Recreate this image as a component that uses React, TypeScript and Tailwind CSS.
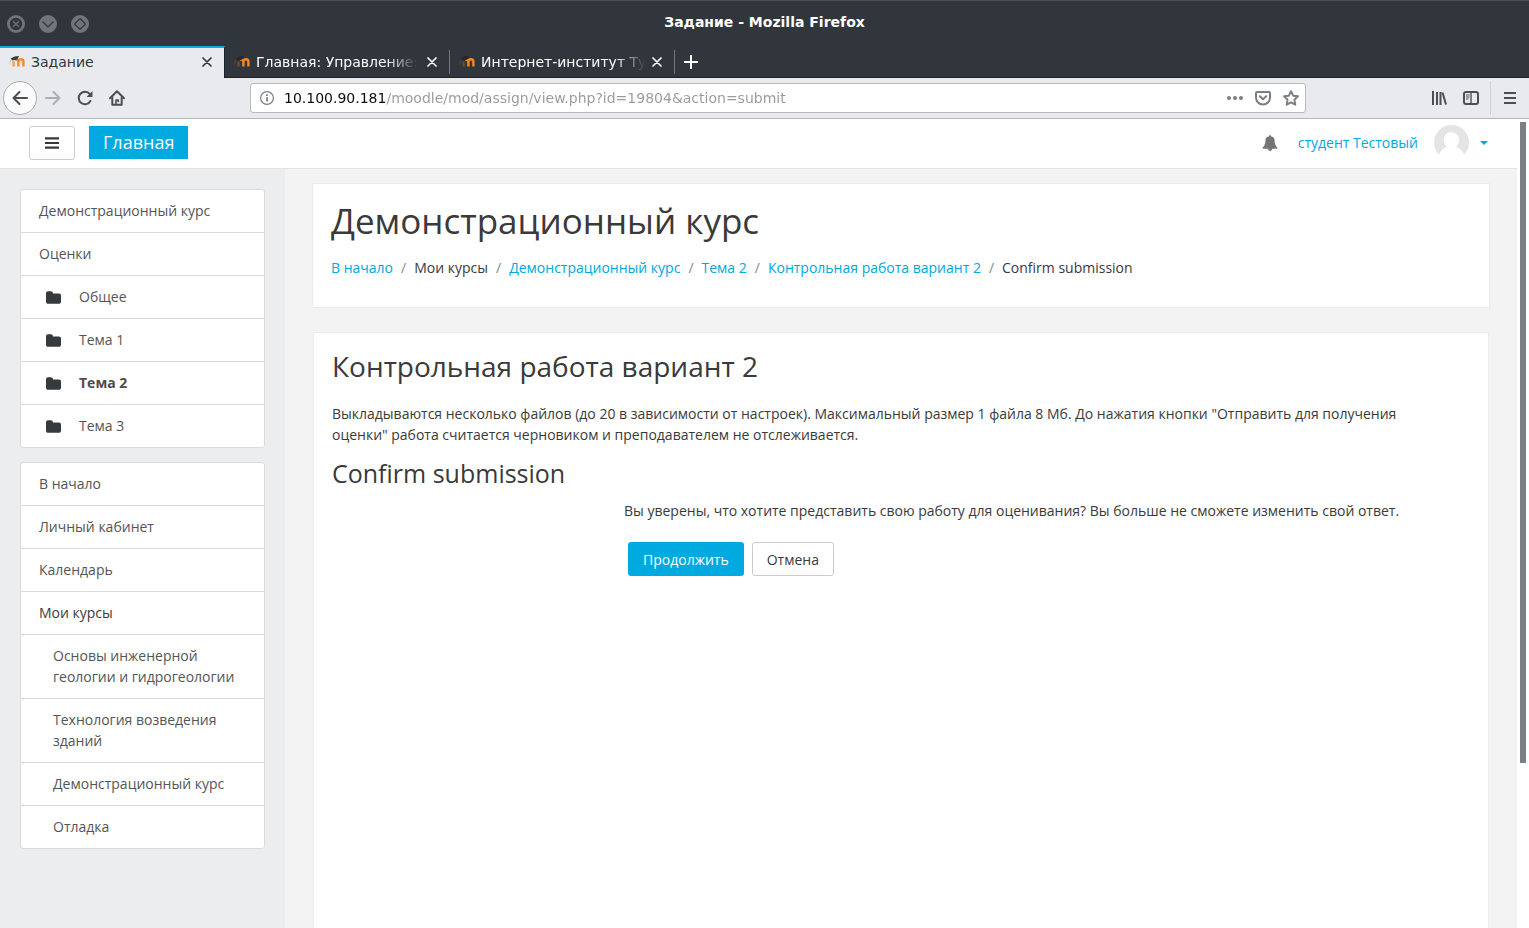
import { useState } from "react";

interface BrowserTab {
  title: string;
  active?: boolean;
}

interface NavItem {
  label: string;
  icon?: boolean;
  nested?: boolean;
  bold?: boolean;
  plain?: boolean;
}

const tabs: BrowserTab[] = [
  { title: "Задание", active: true },
  { title: "Главная: Управление:" },
  { title: "Интернет-институт Ту" },
];

const courseNav: NavItem[] = [
  { label: "Демонстрационный курс" },
  { label: "Оценки" },
  { label: "Общее", icon: true },
  { label: "Тема 1", icon: true },
  { label: "Тема 2", icon: true, bold: true },
  { label: "Тема 3", icon: true },
];

const siteNav: NavItem[] = [
  { label: "В начало" },
  { label: "Личный кабинет" },
  { label: "Календарь" },
  { label: "Мои курсы", plain: true },
  { label: "Основы инженерной геологии и гидрогеологии", nested: true },
  { label: "Технология возведения зданий", nested: true },
  { label: "Демонстрационный курс", nested: true },
  { label: "Отладка", nested: true },
];

const crumbs = [
  { label: "В начало", link: true },
  { label: "Мои курсы", link: false },
  { label: "Демонстрационный курс", link: true },
  { label: "Тема 2", link: true },
  { label: "Контрольная работа вариант 2", link: true },
  { label: "Confirm submission", link: false },
];

function MoodleIcon({ dark }: { dark?: boolean }) {
  return (
    <svg width="16" height="16" viewBox="0 0 16 16" className="shrink-0" aria-hidden="true">
      <path d="M4.600 12.600V7.400" stroke={dark ? "#6b4a2c" : "#f0a050"} strokeWidth="2.400" />
      <path
        d="M9.400 12.600V7.800a2.400 2.400 0 0 0-3.400-2M9.400 12.600V7.700a2.500 2.500 0 0 1 5 0v4.900"
        fill="none"
        stroke="#f08a24"
        strokeWidth="2.400"
      />
      <path d="M1.500 4.800L5.500 2.400l4.500-.4-1.600 3.600-5 1z" fill={dark ? "#24272b" : "#3c3c3c"} />
      <path d="M2.200 5.600C1 7.400.8 9 .9 10.600" fill="none" stroke={dark ? "#5e4a3a" : "#d8c8ba"} strokeWidth="1" />
    </svg>
  );
}

function CloseIcon() {
  return (
    <svg width="10" height="10" viewBox="0 0 10 10" aria-hidden="true">
      <path d="M1 1l8 8M9 1l-8 8" stroke="currentColor" strokeWidth="1.700" strokeLinecap="round" />
    </svg>
  );
}

function BellIcon() {
  return (
    <svg width="16" height="16" viewBox="0 0 1792 1792" fill="currentColor" aria-hidden="true">
      <path d="M912 1696q0-16-16-16-59 0-101.500-42.500t-42.500-101.500q0-16-16-16t-16 16q0 73 51.500 124.500t124.500 51.500q16 0 16-16zm816-288q0 52-38 90t-90 38h-448q0 106-75 181t-181 75-181-75-75-181h-448q-52 0-90-38t-38-90q50-42 91-88t85-119.500 74.500-158.500 50-206 19.500-260q0-152 117-282.500t307-158.500q-8-19-8-39 0-40 28-68t68-28 68 28 28 68q0 20-8 39 190 28 307 158.500t117 282.500q0 139 19.500 260t50 206 74.500 158.500 85 119.500 91 88z" />
    </svg>
  );
}

function FolderIcon() {
  return (
    <svg width="15" height="13" viewBox="0 128 1664 1408" className="ml-[7px] mr-[18px] text-[#373a3c]" aria-hidden="true">
      <path
        d="M1664 608v704q0 92-66 158t-158 66h-1216q-92 0-158-66t-66-158v-960q0-92 66-158t158-66h320q92 0 158 66t66 158v32h672q92 0 158 66t66 158z"
        fill="currentColor"
      />
    </svg>
  );
}

function TitleBar() {
  return (
    <div className="grid h-[46px] grid-cols-[1fr_auto_1fr] items-center border-t border-[#4a4f56] bg-[#31363d] px-[7px]">
      <div className="flex gap-[14px]">
        <button type="button" aria-label="Закрыть" className="size-[18px]">
          <svg width="18" height="18" viewBox="0 0 18 18">
            <circle cx="9" cy="9" r="7.600" fill="#31363d" stroke="#70757a" strokeWidth="2.800" />
            <path d="M6.200 6.200l5.600 5.600M11.800 6.200l-5.600 5.600" stroke="#70757a" strokeWidth="1.300" />
          </svg>
        </button>
        <button type="button" aria-label="Свернуть" className="size-[18px]">
          <svg width="18" height="18" viewBox="0 0 18 18">
            <circle cx="9" cy="9" r="9" fill="#70757a" />
            <path d="M3.500 6.500L9 12l5.500-5.500" fill="none" stroke="#31363d" strokeWidth="1.200" />
          </svg>
        </button>
        <button type="button" aria-label="Развернуть" className="size-[18px]">
          <svg width="18" height="18" viewBox="0 0 18 18">
            <circle cx="9" cy="9" r="9" fill="#70757a" />
            <path d="M9 3.500L14.500 9 9 14.500 3.500 9z" fill="none" stroke="#31363d" strokeWidth="1.200" />
          </svg>
        </button>
      </div>
      <div className="pb-1 text-[14px] font-bold text-white">Задание - Mozilla Firefox</div>
    </div>
  );
}

function TabStrip() {
  return (
    <div className="flex h-8 bg-[#31363d]">
      {tabs.map((tab) => (
        <div
          key={tab.title}
          className={
            tab.active
              ? "flex w-[225px] items-center border-r border-t-2 border-r-[#1f2226] border-t-[#0ab0dc] bg-[#e9eaed] pb-[2px] pl-[9px] pr-3 text-[#31363d]"
              : "flex w-[225px] items-center border-b border-[#1f2226] pl-[9px] text-white"
          }
        >
          <button type="button" className="flex min-w-0 flex-1 items-center gap-[6px]">
            <MoodleIcon dark={!tab.active} />
            <span
              className={
                tab.active
                  ? "whitespace-nowrap"
                  : "whitespace-nowrap [mask-image:linear-gradient(to_left,transparent,black_32px)]"
              }
            >
              {tab.title}
            </span>
          </button>
          <button type="button" aria-label="Закрыть вкладку" className={tab.active ? "" : "ml-1"}>
            <CloseIcon />
          </button>
          {!tab.active && <div className="ml-3 h-6 w-px bg-[#73777c]" />}
        </div>
      ))}
      <div className="flex flex-1 items-center border-b border-[#1f2226] pl-[9px] text-white">
        <button type="button" aria-label="Новая вкладка">
          <svg width="14" height="14" viewBox="0 0 14 14">
            <path d="M7 0v14M0 7h14" stroke="currentColor" strokeWidth="2" />
          </svg>
        </button>
      </div>
    </div>
  );
}

function Toolbar() {
  const [url, setUrl] = useState("10.100.90.181/moodle/mod/assign/view.php?id=19804&action=submit");

  return (
    <div className="flex h-[41px] items-center border-b border-[#b5b5b8] bg-[#e9eaed] pl-[3px] pr-3 text-[#4a4f54]">
      <button
        type="button"
        aria-label="Назад"
        className="flex size-[34px] items-center justify-center rounded-full border border-[#a9abae] bg-[#fbfbfb]"
      >
        <svg width="16" height="16" viewBox="0 0 16 16" fill="none" stroke="currentColor" strokeWidth="2" strokeLinecap="round" strokeLinejoin="round">
          <path d="M15 8H1.500M7.500 2L1.500 8l6 6" />
        </svg>
      </button>
      <button type="button" aria-label="Вперёд" className="ml-2 text-[#acaeb1]">
        <svg width="16" height="16" viewBox="0 0 16 16" fill="none" stroke="currentColor" strokeWidth="2" strokeLinecap="round" strokeLinejoin="round">
          <path d="M1 8h13.500M8.500 2l6 6-6 6" />
        </svg>
      </button>
      <button type="button" aria-label="Обновить" className="ml-4">
        <svg width="16" height="16" viewBox="0 0 16 16" fill="none" stroke="currentColor" strokeWidth="2">
          <path d="M13.400 11A6.200 6.200 0 1 1 12.800 4.200" strokeLinecap="round" />
          <path d="M15.500 1v6H9.500z" fill="currentColor" stroke="none" />
        </svg>
      </button>
      <button type="button" aria-label="Домой" className="ml-4">
        <svg width="16" height="16" viewBox="0 0 16 16" fill="none" stroke="currentColor" strokeWidth="2" strokeLinecap="round" strokeLinejoin="round">
          <path d="M1 8.200L8 1.300l7 6.900M3.300 7.500v7.300h9.400V7.500" />
          <path d="M7 14v-4h2.200v1.600" strokeWidth="1.600" />
        </svg>
      </button>

      <div className="ml-[125px] mr-[125px] flex h-[30px] flex-1 items-center rounded-[3px] border border-[#b8babd] bg-white pl-[9px] pr-[6px] text-[#7b7e81]">
        <svg width="14" height="14" viewBox="0 0 14 14" aria-hidden="true">
          <circle cx="7" cy="7" r="6.400" fill="none" stroke="currentColor" strokeWidth="1.200" />
          <path d="M7 6.200v4.300M7 3.300v1.700" stroke="currentColor" strokeWidth="1.800" />
        </svg>
        <input
          type="text"
          aria-label="Адрес"
          value={url}
          onChange={(e) => setUrl(e.target.value)}
          className="ml-[10px] min-w-0 flex-1 bg-[linear-gradient(to_right,#0c0c0d_102px,#97999b_102px)] bg-clip-text text-transparent outline-none"
        />
        <button type="button" aria-label="Действия">
          <svg width="16" height="16" viewBox="0 0 16 16" fill="currentColor">
            <circle cx="2" cy="8" r="2" />
            <circle cx="8" cy="8" r="2" />
            <circle cx="14" cy="8" r="2" />
          </svg>
        </button>
        <button type="button" aria-label="Pocket" className="ml-3">
          <svg width="16" height="16" viewBox="0 0 16 16" fill="none" stroke="currentColor" strokeWidth="2" strokeLinecap="round" strokeLinejoin="round">
            <path d="M2 2h12a1 1 0 0 1 1 1v4.500a7 7 0 0 1-14 0V3a1 1 0 0 1 1-1z" />
            <path d="M4.800 6.300L8 9.300l3.200-3" />
          </svg>
        </button>
        <button type="button" aria-label="Добавить в закладки" className="ml-3">
          <svg width="16" height="16" viewBox="0 0 16 16" fill="none" stroke="currentColor" strokeWidth="1.900" strokeLinejoin="round">
            <path d="M8 1.200l2.100 4.500 4.900.6-3.600 3.400.9 5L8 12.300l-4.300 2.400.9-5L1 6.300l4.900-.6z" />
          </svg>
        </button>
      </div>

      <button type="button" aria-label="Библиотека">
        <svg width="16" height="16" viewBox="0 0 16 16" stroke="currentColor" strokeWidth="2">
          <path d="M2 1v14M6 2v13M9.500 2v13M11.500 2.500l3.500 12" />
        </svg>
      </button>
      <button type="button" aria-label="Боковая панель" className="ml-4">
        <svg width="16" height="16" viewBox="0 0 16 16" fill="none" stroke="currentColor">
          <rect x="1" y="2" width="14" height="12" rx="2" strokeWidth="2" />
          <path d="M8 2v12" strokeWidth="1.400" />
          <path d="M3 5h3.500M3 7h3.500M3 9h2.500" />
        </svg>
      </button>
      <div className="ml-[11px] h-[34px] w-px bg-[#cfd0d3]" />
      <button type="button" aria-label="Меню" className="ml-[13px]">
        <svg width="13" height="14" viewBox="0 0 13 14" stroke="currentColor" strokeWidth="2">
          <path d="M0 2h12M0 7h12M0 12h12" />
        </svg>
      </button>
    </div>
  );
}

function SiteHeader() {
  return (
    <header className="flex h-[50px] shrink-0 items-center border-b border-[#e1e2e3] bg-white px-[29px] pb-[2px]">
      <button
        type="button"
        aria-label="Боковая панель курса"
        className="flex h-[34px] w-[46px] items-center justify-center rounded-[3px] border border-[#ccc] text-[#373a3c]"
      >
        <svg width="14" height="12" viewBox="0 0 14 12" stroke="currentColor" strokeWidth="2.200" aria-hidden="true">
          <path d="M0 1.300h14M0 6h14M0 10.700h14" />
        </svg>
      </button>
      <a href="#" className="ml-[14px] bg-[#00aae1] px-[14px] py-[3px] text-[18px] leading-[27px] text-white">
        Главная
      </a>
      <div className="ml-auto flex items-center">
        <button type="button" aria-label="Уведомления" className="text-[#757575]">
          <BellIcon />
        </button>
        <a href="#" className="ml-5 text-[#00a8de]">
          студент Тестовый
        </a>
        <button type="button" aria-label="Меню пользователя" className="ml-4 flex items-center">
          <svg width="35" height="35" viewBox="0 0 35 35" aria-hidden="true">
            <circle cx="17.500" cy="17.500" r="17.500" fill="#e4e4e4" />
            <path
              d="M17.500 7.300c4.600 0 7.600 3.300 7.600 7.900 0 3-1.200 5.400-3.200 6.800 4.500 1 7 4 8 8.100V35H5.100V30c1-4 3.500-7 8-8-2-1.400-3.200-3.800-3.200-6.800 0-4.600 3-7.900 7.600-7.900z"
              fill="#fff"
            />
          </svg>
          <svg width="8" height="4" viewBox="0 0 8 4" className="ml-[11px]" aria-hidden="true">
            <path d="M0 0h8L4 4z" fill="#00a8de" />
          </svg>
        </button>
      </div>
    </header>
  );
}

function NavList({ items }: { items: NavItem[] }) {
  return (
    <ul className="divide-y divide-[#dadbdc] rounded-[3px] border border-[#dadbdc] bg-white">
      {items.map((item) => (
        <li key={item.label} className={item.nested ? "pb-[11px] pl-8 pr-[18px] pt-[10px]" : "px-[18px] py-[10px]"}>
          {item.plain ? (
            <span className="block leading-[22px]">{item.label}</span>
          ) : (
            <a
              href="#"
              className={
                item.bold
                  ? "flex items-center font-bold leading-[22px] text-[#4c4c4c]"
                  : item.nested
                    ? "flex items-center leading-[21px] text-[#555]"
                    : "flex items-center leading-[22px] text-[#555]"
              }
            >
              {item.icon && <FolderIcon />}
              {item.label}
            </a>
          )}
        </li>
      ))}
    </ul>
  );
}

function Breadcrumbs() {
  return (
    <nav aria-label="Навигация">
      <ol className="flex flex-wrap leading-[21px]">
        {crumbs.map((crumb, i) => (
          <li key={crumb.label} className="flex">
            {i > 0 && <span className="px-2 text-[#818a91]">/</span>}
            {crumb.link ? (
              <a href="#" className="text-[#00a8de]">
                {crumb.label}
              </a>
            ) : (
              <span>{crumb.label}</span>
            )}
          </li>
        ))}
      </ol>
    </nav>
  );
}

export default function App() {
  return (
    <div className="flex h-screen flex-col overflow-hidden bg-white">
      <div className="shrink-0 font-['DejaVu_Sans',sans-serif] text-[14px] leading-5">
        <TitleBar />
        <TabStrip />
        <Toolbar />
      </div>

      <div className="flex min-h-0 flex-1 font-['Open_Sans',sans-serif] text-[14px] leading-[21px] text-[#3a3a3a]">
        <div className="flex min-w-0 flex-1 flex-col">
          <SiteHeader />
          <div className="flex min-h-0 flex-1 bg-[#f3f3f3]">
            <aside className="flex w-[285px] shrink-0 flex-col gap-[14px] bg-[#ecedef] p-5">
              <NavList items={courseNav} />
              <NavList items={siteNav} />
            </aside>

            <main className="flex min-w-0 flex-1 flex-col px-[27px] pt-[14px]">
              <div className="border border-[#ececec] bg-white px-[18px] pb-[29px] pt-4">
                <h1 className="mb-[15px] text-[35px] leading-[42px]">Демонстрационный курс</h1>
                <Breadcrumbs />
              </div>

              <section className="mx-px mt-6 flex-1 border border-b-0 border-[#ececec] bg-white px-[18px] pt-[17px]">
                <h2 className="text-[28px] leading-[33px]">Контрольная работа вариант 2</h2>
                <p className="mt-5 pr-5">
                  Выкладываются несколько файлов (до 20 в зависимости от настроек). Максимальный размер 1 файла 8 Мб.
                  До нажатия кнопки "Отправить для получения оценки" работа считается черновиком и преподавателем не
                  отслеживается.
                </p>
                <h3 className="mt-[14px] text-[25px] leading-[28px]">Confirm submission</h3>
                <form className="pl-[292px]" onSubmit={(e) => e.preventDefault()}>
                  <p className="mt-[13px]">
                    Вы уверены, что хотите представить свою работу для оценивания? Вы больше не сможете изменить свой
                    ответ.
                  </p>
                  <div className="ml-1 mt-[21px] flex gap-2">
                    <button type="submit" className="h-[34px] rounded-[3px] bg-[#00aae1] px-[15px] text-white">
                      Продолжить
                    </button>
                    <button type="button" className="h-[34px] rounded-[3px] border border-[#ccc] bg-white px-[14px]">
                      Отмена
                    </button>
                  </div>
                </form>
              </section>
            </main>
          </div>
        </div>

        {/* page scrollbar */}
        <div className="w-3 shrink-0 bg-white px-[3px] pt-[3px]">
          <div className="h-[79.5%] bg-[#7a7f83]" />
        </div>
      </div>
    </div>
  );
}
